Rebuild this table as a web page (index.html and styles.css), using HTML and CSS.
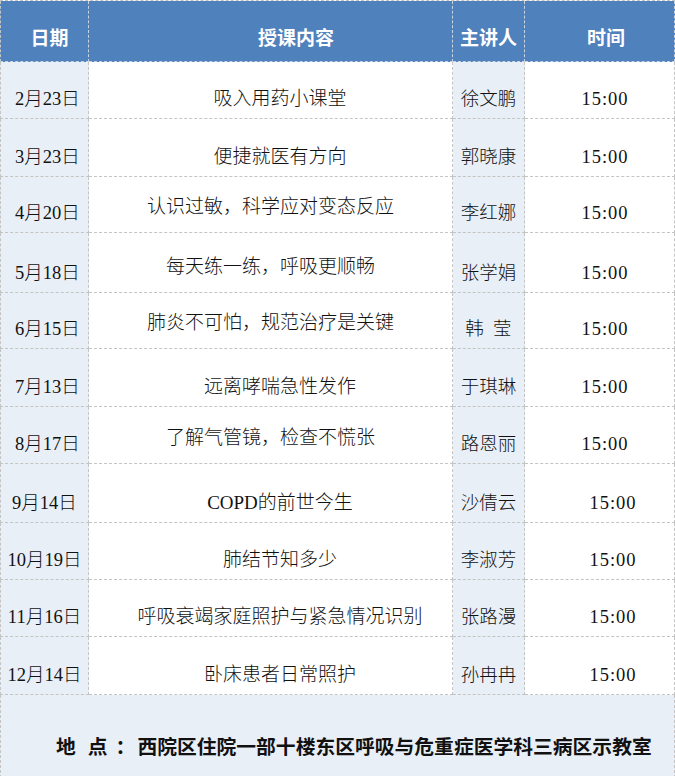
FILE: index.html
```html
<!DOCTYPE html>
<html lang="zh">
<head>
<meta charset="utf-8">
<title>课程安排</title>
<link rel="stylesheet" href="styles.css">
</head>
<body>
<div class="sheet">
  <div class="cell head h-date">日期</div>
  <div class="cell head h-topic">授课内容</div>
  <div class="cell head h-who">主讲人</div>
  <div class="cell head h-time">时间</div>

  <div class="cell date">2月23日</div>
  <div class="cell topic">吸入用药小课堂</div>
  <div class="cell who">徐文鹏</div>
  <div class="cell time">15:00</div>

  <div class="cell date">3月23日</div>
  <div class="cell topic">便捷就医有方向</div>
  <div class="cell who">郭晓康</div>
  <div class="cell time">15:00</div>

  <div class="cell date">4月20日</div>
  <div class="cell topic raised">认识过敏，科学应对变态反应</div>
  <div class="cell who">李红娜</div>
  <div class="cell time">15:00</div>

  <div class="cell date">5月18日</div>
  <div class="cell topic raised">每天练一练，呼吸更顺畅</div>
  <div class="cell who">张学娟</div>
  <div class="cell time">15:00</div>

  <div class="cell date">6月15日</div>
  <div class="cell topic raised">肺炎不可怕，规范治疗是关键</div>
  <div class="cell who">韩&nbsp;&nbsp;莹</div>
  <div class="cell time">15:00</div>

  <div class="cell date">7月13日</div>
  <div class="cell topic">远离哮喘急性发作</div>
  <div class="cell who">于琪琳</div>
  <div class="cell time">15:00</div>

  <div class="cell date">8月17日</div>
  <div class="cell topic raised">了解气管镜，检查不慌张</div>
  <div class="cell who">路恩丽</div>
  <div class="cell time">15:00</div>

  <div class="cell date late">9月14日</div>
  <div class="cell topic">COPD的前世今生</div>
  <div class="cell who">沙倩云</div>
  <div class="cell time late">15:00</div>

  <div class="cell date late">10月19日</div>
  <div class="cell topic">肺结节知多少</div>
  <div class="cell who">李淑芳</div>
  <div class="cell time late">15:00</div>

  <div class="cell date late">11月16日</div>
  <div class="cell topic">呼吸衰竭家庭照护与紧急情况识别</div>
  <div class="cell who">张路漫</div>
  <div class="cell time late">15:00</div>

  <div class="cell date late">12月14日</div>
  <div class="cell topic">卧床患者日常照护</div>
  <div class="cell who">孙冉冉</div>
  <div class="cell time late">15:00</div>

  <div class="cell place"><span class="lbl-a">地</span><span class="lbl-b">点</span><span class="lbl-c">：</span><span>西院区住院一部十楼东区呼吸与危重症医学科三病区示教室</span></div>
</div>
</body>
</html>
```

FILE: styles.css
```css
html, body {
  margin: 0;
  padding: 0;
  background: #ffffff;
}

body {
  font-family: "Liberation Serif", "Noto Sans CJK SC", serif;
  color: #111111;
}

.sheet {
  width: 675px;
  height: 776px;
  display: grid;
  grid-template-columns: 89px 364px 72px 150px;
  grid-template-rows: 61px 57px 58px 56px 60px 56px 58px 57px 59px 57px 57px 58px 83px;
  box-sizing: border-box;
  border-top: 1px dashed #c4c4c4;
}

.cell {
  box-sizing: border-box;
  border-right: 1px dashed #c4c4c4;
  border-bottom: 1px dashed #c4c4c4;
  display: flex;
  align-items: flex-end;
  justify-content: center;
  font-size: 18.5px;
  line-height: 20px;
  padding-bottom: 9px;
  white-space: nowrap;
  font-weight: 300;
}

.head {
  background: #4f81bd;
  color: #ffffff;
  font-weight: 700;
  font-size: 19px;
  padding-bottom: 12px;
  border-right-color: #c9d3e0;
  border-bottom-color: #c9d3e0;
}

.h-date { border-left: 1px dashed #c4c4c4; padding-left: 10px; }
.h-topic { padding-left: 51px; }
.h-time { padding-left: 13px; }

.date {
  background: #e9eff7;
  border-left: 1px dashed #c4c4c4;
  padding-left: 6px;
}
.date.late { padding-left: 0; }

.topic {
  font-size: 19px;
  padding-left: 19px;
}
.topic.raised {
  padding-left: 0;
  padding-bottom: 15px;
}

.who {
  background: #e9eff7;
}

.time {
  padding-left: 11px;
  letter-spacing: 1px;
}
.time.late { padding-left: 27px; }

.place {
  grid-column: 1 / -1;
  background: #e9eff7;
  border-left: 1px dashed #c4c4c4;
  border-bottom: none;
  justify-content: flex-start;
  padding-left: 55px;
  padding-bottom: 21px;
  font-weight: 700;
  font-size: 19.8px;
}

.lbl-a { margin-right: 12px; }
.lbl-c { margin-left: 8px; margin-right: 2px; }
```
